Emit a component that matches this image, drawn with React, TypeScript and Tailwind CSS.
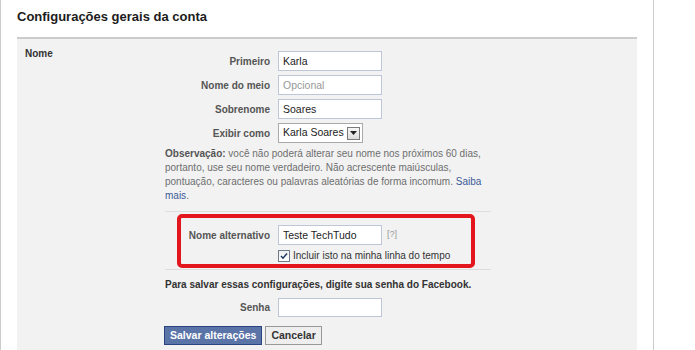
import React from 'react';

const FieldRow: React.FC<{ label: string; children: React.ReactNode }> = ({ label, children }) => (
  <div className="grid grid-cols-[105px_1fr] gap-x-[8px] items-center h-[20px] mb-[4px]">
    <div className="text-right font-bold text-[#555555] whitespace-nowrap">{label}</div>
    <div className="flex items-center">{children}</div>
  </div>
);

const TextBox: React.FC<{ value?: string; placeholder?: string }> = ({ value, placeholder }) => (
  <input
    readOnly
    defaultValue={value}
    placeholder={placeholder}
    className="w-[104px] h-[20px] border border-[#bdc7d8] bg-white px-[4px] text-[10.5px] text-[#1c1c1c] placeholder:text-[#999999] outline-none"
  />
);

const App: React.FC = () => {
  return (
    <div className="w-[695px] h-[350px] overflow-hidden bg-white text-[10px] text-[#333333] font-['Liberation_Sans',Arial,sans-serif]">
      <div className="w-[654px] h-full border-x border-[#cccccc] px-[16px] flex flex-col">
        {/* Titulo */}
        <div className="h-[37px] pt-[8px] shrink-0">
          <h2 className="text-[13px] leading-[18px] font-bold text-[#1c1c1c]">Configurações gerais da conta</h2>
        </div>

        {/* Painel */}
        <div className="flex-1 border-t-2 border-[#cccccc] bg-[#f2f2f2] flex pl-[8px] pt-[12px]">
          <div className="w-[140px] -mt-[3px] leading-[12px] font-bold text-[#333333]">Nome</div>

          <div className="w-[326px] flex flex-col">
            <FieldRow label="Primeiro">
              <TextBox value="Karla" />
            </FieldRow>
            <FieldRow label="Nome do meio">
              <TextBox placeholder="Opcional" />
            </FieldRow>
            <FieldRow label="Sobrenome">
              <TextBox value="Soares" />
            </FieldRow>
            <FieldRow label="Exibir como">
              <div className="w-[85px] h-[20px] border border-[#a9a9a9] bg-white flex items-center justify-between pl-[4px] pr-[2px] text-[10.5px] text-[#1c1c1c]">
                <span>Karla Soares</span>
                <span className="w-[13px] h-[13px] border border-[#7a7a7a] bg-gradient-to-b from-[#f7f7f7] to-[#dcdcdc] flex items-center justify-center">
                  <svg width="7" height="4" viewBox="0 0 7 4">
                    <path d="M0 0 H7 L3.5 4 Z" fill="#222" />
                  </svg>
                </span>
              </div>
            </FieldRow>

            <p className="leading-[14px] text-[#6e6e6e] whitespace-nowrap">
              <span className="font-bold text-[#555555]">Observação:</span> você não poderá alterar seu nome nos próximos 60 dias,
              <br />
              portanto, use seu nome verdadeiro. Não acrescente maiúsculas,
              <br />
              pontuação, caracteres ou palavras aleatórias de forma incomum. <span className="text-[#3b5998]">Saiba</span>
              <br />
              <span className="text-[#3b5998]">mais</span>.
            </p>

            {/* Nome alternativo */}
            <div className="relative mt-[8px] border-t border-[#dddddd] pt-[13px] pb-[7px]">
              <div className="grid grid-cols-[105px_1fr] gap-x-[8px] items-center h-[20px]">
                <div className="text-right font-bold text-[#555555] whitespace-nowrap">Nome alternativo</div>
                <div className="flex items-center">
                  <TextBox value="Teste TechTudo" />
                  <span className="ml-[5px] text-[9px] text-[#999999]">[?]</span>
                </div>
              </div>
              <div className="mt-[4px] pl-[113px] flex items-center gap-[3px] h-[13px]">
                <span className="w-[12px] h-[12px] border border-[#6f7a8a] bg-gradient-to-b from-[#eeeeee] to-[#ffffff] flex items-center justify-center">
                  <svg width="8" height="8" viewBox="0 0 8 8">
                    <path d="M1 4 L3 6.2 L7 1.5" fill="none" stroke="#1f3a66" strokeWidth="1.5" />
                  </svg>
                </span>
                <span className="text-[#333333]">Incluir isto na minha linha do tempo</span>
              </div>
              <div className="absolute left-[12px] right-[16px] top-[2px] bottom-[1px] border-4 border-[#e2161c] rounded-[5px]" />
            </div>

            {/* Senha */}
            <div className="border-t border-[#dddddd] pt-[8px]">
              <div className="leading-[14px] font-bold text-[#333333] whitespace-nowrap">
                Para salvar essas configurações, digite sua senha do Facebook.
              </div>
              <div className="mt-[6px] grid grid-cols-[105px_1fr] gap-x-[8px] items-center h-[19px]">
                <div className="text-right font-bold text-[#555555]">Senha</div>
                <input
                  readOnly
                  type="password"
                  className="w-[104px] h-[19px] border border-[#bdc7d8] bg-white outline-none"
                />
              </div>
              <div className="mt-[9px] -ml-[1px] flex gap-[3px]">
                <button className="h-[19px] px-[5px] border border-[#29447e] bg-[#5b74a8] text-white font-bold text-[10.5px] leading-[17px]">
                  Salvar alterações
                </button>
                <button className="h-[19px] px-[5px] border border-[#999999] bg-[#eeeeee] text-[#333333] font-bold text-[10.5px] leading-[17px]">
                  Cancelar
                </button>
              </div>
            </div>
          </div>
        </div>
      </div>
    </div>
  );
};

export default App;
